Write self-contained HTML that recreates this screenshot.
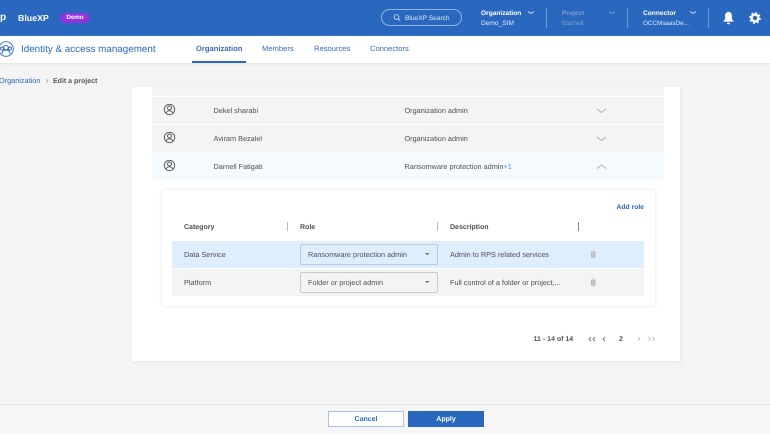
<!DOCTYPE html>
<html><head><meta charset="utf-8"><style>
html,body{margin:0;padding:0;width:770px;height:434px;overflow:hidden;background:#f4f4f4}
body{position:relative;font-family:"Liberation Sans",sans-serif;font-size:7.3px;color:#4d4d4d;text-rendering:geometricPrecision}
#p{position:absolute;left:0;top:0;width:770px;height:434px;filter:blur(.3px);overflow:hidden}
div,span.a,svg.a{position:absolute}
.t{white-space:nowrap;line-height:10px}
.b{font-weight:bold;font-size:7px}
.w{color:#fff}
.h{font-size:6.6px}
</style></head><body><div id="p">
<div style="left:0;top:0;width:770px;height:36px;background:#2968be"></div>
<div class="t w" style="left:0;top:13px;font-size:10px;font-weight:bold">p</div>
<div class="t w" style="left:18px;top:13px;font-size:8.8px;font-weight:bold">BlueXP</div>
<div class="t b w" style="left:60px;top:13px;width:30px;height:10px;background:#9333e0;border-radius:5px;text-align:center;font-size:6.2px">Demo</div>
<div style="left:381px;top:9px;width:79px;height:15px;border:1px solid #8fb2e2;border-radius:9px"></div>
<svg class="a" style="left:392.500px;top:13px" width="8" height="9" viewBox="0 0 8 9" fill="none" stroke="#dce8f8" stroke-width=".8"><circle cx="3.500" cy="4" r="2.400"/><path d="M5.300 5.800l1.700 1.700"/></svg>
<div class="t h" style="left:405px;top:13.500px;color:#e4edf9">BlueXP Search</div>
<div class="t b h w" style="left:481px;top:9px;font-size:6.600px">Organization</div>
<div class="t h" style="left:481px;top:18.500px;color:#e4edf9">Demo_SIM</div>
<div class="t b" style="left:562px;top:9px;color:#7f9fcf;font-size:6.600px">Project</div>
<div class="t h" style="left:562px;top:18.500px;color:#7f9fcf">fdarnell</div>
<div class="t b w" style="left:643px;top:9px;font-size:6.600px">Connector</div>
<div class="t w" style="left:643px;top:18.500px;color:#e4edf9;font-size:6.300px">OCCMsaasDe...</div>
<svg class="a" style="left:0;top:0" width="770" height="36" fill="none" stroke-width=".9">
<path d="M528 11.500l3 2 3-2" stroke="#dce8f8"/><path d="M609 11.500l3 2 3-2" stroke="#7f9fcf"/><path d="M690 11.500l3 2 3-2" stroke="#dce8f8"/>
<path d="M546.500 8v20M627.500 8v20M708.500 8v20" stroke="#7a9fd6"/>
<path d="M728.500 12a3.200 3.200 0 0 1 3.200 3.500v3.500l1.800 2.500h-10l1.800-2.500v-3.500a3.200 3.200 0 0 1 3.200-3.500z" fill="#fff" stroke="#fff" stroke-width=".4"/><rect x="727" y="22.800" width="3" height="1.400" rx=".7" fill="#fff" stroke="none"/>
<circle cx="755" cy="18" r="3.400" stroke="#fff" stroke-width="2.400"/><circle cx="755" cy="18" r="5" stroke="#fff" stroke-width="1.600" stroke-dasharray="2 1.930"/>
</svg>

<div style="left:0;top:36px;width:770px;height:27px;background:#fff;box-shadow:0 1px 2px #e2e2e2"></div>
<svg class="a" style="left:0;top:41px" width="15" height="16" viewBox="0 0 15 16" fill="none" stroke="#2968be" stroke-width=".9"><circle cx="6" cy="8" r="7.300"/><circle cx="6" cy="6.500" r="2.200"/><circle cx="2" cy="7.500" r="1.500"/><circle cx="10" cy="7.500" r="1.500"/><path d="M2 13c0-3 2-4 4-4s4 1 4 4"/></svg>
<div class="t" style="left:21px;top:44px;font-size:9.850px;line-height:12px;color:#2968be">Identity &amp; access management</div>
<div class="t" style="left:196px;top:44px;color:#3a6cb8;font-size:7.600px;font-weight:bold">Organization</div>
<div style="left:192px;top:61px;width:54px;height:2px;background:#2968be"></div>
<div class="t" style="left:262px;top:44px;color:#3a6cb8;font-size:7.600px">Members</div>
<div class="t" style="left:314px;top:44px;color:#3a6cb8;font-size:7.600px">Resources</div>
<div class="t" style="left:370px;top:44px;color:#3a6cb8;font-size:7.600px">Connectors</div>

<div class="t" style="left:-1px;top:76px;color:#2968be">Organization</div>
<svg class="a" style="left:44px;top:78px" width="6" height="6" fill="none" stroke="#999" stroke-width=".7"><path d="M2 1l2 2-2 2"/></svg>
<div class="t b" style="left:53px;top:77px;color:#555">Edit a project</div>

<div style="left:132px;top:87px;width:548px;height:274px;background:#fff;box-shadow:1px 1px 3px #e6e6e6"></div>
<div style="left:152px;top:87px;width:512px;height:9px;background:#f4f4f4"></div>
<div style="left:152px;top:97px;width:512px;height:27px;background:#f4f4f4"></div>
<div style="left:152px;top:125px;width:512px;height:27px;background:#f4f4f4"></div>
<div style="left:152px;top:152px;width:512px;height:27.500px;background:#f5faff"></div>

<svg class="a" style="left:0;top:0" width="770" height="434" fill="none" stroke="#555" stroke-width=".9">
<g><circle cx="169.500" cy="109.500" r="5.200"/><circle cx="169.500" cy="108" r="2"/><path d="M166 113.300c.5-2 2-2.500 3.500-2.500s3 .5 3.500 2.500"/></g>
<g transform="translate(0 28)"><circle cx="169.500" cy="109.500" r="5.200"/><circle cx="169.500" cy="108" r="2"/><path d="M166 113.300c.5-2 2-2.500 3.500-2.500s3 .5 3.500 2.500"/></g>
<g transform="translate(0 56)"><circle cx="169.500" cy="109.500" r="5.200"/><circle cx="169.500" cy="108" r="2"/><path d="M166 113.300c.5-2 2-2.500 3.500-2.500s3 .5 3.500 2.500"/></g>
<path d="M597 109l4.500 3.500 4.500-3.500M597 137l4.500 3.500 4.500-3.500M597 168.500l4.500-3.500 4.500 3.500" stroke="#b0b0b0"/>
</svg>
<div class="t" style="left:213.500px;top:106px">Dekel sharabi</div>
<div class="t" style="left:213.500px;top:134px">Aviram Bezalel</div>
<div class="t" style="left:213.500px;top:162px">Darnell Fatigati</div>
<div class="t" style="left:404.500px;top:106px">Organization admin</div>
<div class="t" style="left:404.500px;top:134px">Organization admin</div>
<div class="t" style="left:404.500px;top:162px">Ransomware protection admin<span style="color:#4b86d8">+1</span></div>

<div style="left:162px;top:190px;width:493px;height:116px;background:#fff;box-shadow:0 0 3px #e2e2e2"></div>
<div class="t b" style="left:616.500px;top:202.500px;color:#2968be;font-size:6.800px">Add role</div>
<div class="t b" style="left:184px;top:223px">Category</div>
<div class="t b" style="left:300px;top:223px">Role</div>
<div class="t b" style="left:450px;top:223px">Description</div>
<div style="left:287px;top:222px;width:1px;height:9px;background:#bbb"></div>
<div style="left:437px;top:222px;width:1px;height:9px;background:#bbb"></div>
<div style="left:578px;top:222px;width:1px;height:9px;background:#888"></div>

<div style="left:172px;top:241px;width:472px;height:26.500px;background:#deeefd"></div>
<div style="left:172px;top:269px;width:472px;height:26.500px;background:#f4f4f4"></div>
<div class="t" style="left:184px;top:250px">Data Service</div>
<div class="t" style="left:184px;top:278px">Platform</div>
<div style="left:300px;top:244px;width:135.500px;height:18.500px;border:1px solid #c0c8d2;border-radius:2px"></div>
<div style="left:300px;top:272px;width:135.500px;height:18.500px;border:1px solid #cccccc;border-radius:2px"></div>
<div class="t" style="left:308px;top:250px">Ransomware protection admin</div>
<div class="t" style="left:308px;top:278px">Folder or project admin</div>
<svg class="a" style="left:0;top:0" width="770" height="434"><path d="M425 253h4.500l-2.250 2.200zM425 281h4.500l-2.250 2.200z" fill="#777"/>
<g fill="#c4c4c4" stroke="#a8a8a8" stroke-width=".6"><path d="M590.500 252h5.500M591.500 252v5.500h3.500V252h-3.500M592.500 251h1.500M590.500 280h5.500M591.500 280v5.500h3.500V280h-3.500M592.500 279h1.500"/></g></svg>
<div class="t" style="left:450px;top:250px">Admin to RPS related services</div>
<div class="t" style="left:450px;top:278px">Full control of a folder or project,...</div>

<div class="t b" style="left:533.500px;top:335px;color:#555">11 - 14 of 14</div>
<div class="t b" style="left:619px;top:335px;color:#555">2</div>
<svg class="a" style="left:0;top:0" width="770" height="434" fill="none" stroke-width=".9">
<path d="M591 337l-2 2 2 2M595 337l-2 2 2 2M605 337l-2 2 2 2" stroke="#777"/>
<path d="M638 337l2 2-2 2M648.500 337l2 2-2 2M652.500 337l2 2-2 2" stroke="#c0c0c0"/></svg>

<div style="left:0;top:404px;width:770px;height:30px;background:#f6f6f6;border-top:1px solid #e4e4e4;box-sizing:border-box"></div>
<div class="t b" style="left:328px;top:411px;width:76px;height:16px;line-height:16px;background:#fff;border:1px solid #a9c4ea;box-sizing:border-box;text-align:center;color:#2968be">Cancel</div>
<div class="t b w" style="left:408px;top:411px;width:76px;height:16px;line-height:17px;background:#2968be;text-align:center">Apply</div>
</div></body></html>
